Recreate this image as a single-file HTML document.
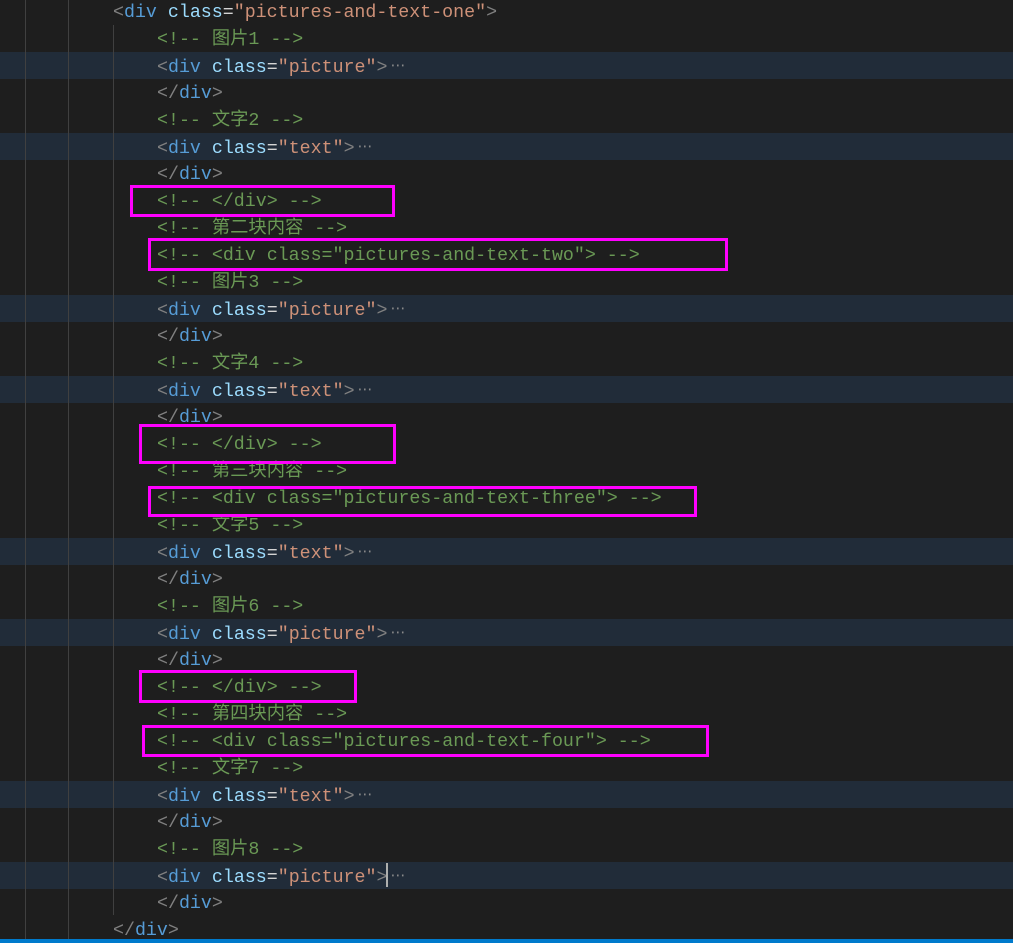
<!DOCTYPE html>
<html><head><meta charset="utf-8"><style>
body{margin:0;width:1013px;height:943px;background:#1e1e1e;overflow:hidden;position:relative;font-family:"Liberation Mono","Noto Sans CJK SC",monospace;font-size:18.3px;}
.l{position:absolute;left:0;width:1013px;height:27px;line-height:27px;white-space:pre;}
.l span{position:relative;top:2px}
.h{background:#212c39;}
.g{position:absolute;top:0;width:1px;background:#404040;}
.b{color:#808080}.t{color:#569cd6}.a{color:#9cdcfe}.s{color:#ce9178}.c{color:#6a9955}.w{color:#d4d4d4}.l .e{color:#8a8a8a;font-family:"DejaVu Sans",sans-serif;font-size:15px;top:0;padding-left:3px}
.box{position:absolute;border:3px solid #f0f;box-sizing:border-box;}
.bar{position:absolute;left:0;top:939px;width:1013px;height:4px;background:#007acc}
.cur{position:absolute;left:386px;top:863px;width:2px;height:24px;background:#aeafad}
</style></head><body>
<div class="l" style="top:-2px"><span style="padding-left:113px"></span><span class="b">&lt;</span><span class="t">div</span> <span class="a">class</span><span class="w">=</span><span class="s">"pictures-and-text-one"</span><span class="b">&gt;</span></div>
<div class="l" style="top:25px"><span style="padding-left:157px"></span><span class="c">&lt;!-- 图片1 --&gt;</span></div>
<div class="l h" style="top:52px"><span style="padding-left:157px"></span><span class="b">&lt;</span><span class="t">div</span> <span class="a">class</span><span class="w">=</span><span class="s">"picture"</span><span class="b">&gt;</span><span class="e">⋯</span></div>
<div class="l" style="top:79px"><span style="padding-left:157px"></span><span class="b">&lt;/</span><span class="t">div</span><span class="b">&gt;</span></div>
<div class="l" style="top:106px"><span style="padding-left:157px"></span><span class="c">&lt;!-- 文字2 --&gt;</span></div>
<div class="l h" style="top:133px"><span style="padding-left:157px"></span><span class="b">&lt;</span><span class="t">div</span> <span class="a">class</span><span class="w">=</span><span class="s">"text"</span><span class="b">&gt;</span><span class="e">⋯</span></div>
<div class="l" style="top:160px"><span style="padding-left:157px"></span><span class="b">&lt;/</span><span class="t">div</span><span class="b">&gt;</span></div>
<div class="l" style="top:187px"><span style="padding-left:157px"></span><span class="c">&lt;!-- &lt;/div&gt; --&gt;</span></div>
<div class="l" style="top:214px"><span style="padding-left:157px"></span><span class="c">&lt;!-- 第二块内容 --&gt;</span></div>
<div class="l" style="top:241px"><span style="padding-left:157px"></span><span class="c">&lt;!-- &lt;div class="pictures-and-text-two"&gt; --&gt;</span></div>
<div class="l" style="top:268px"><span style="padding-left:157px"></span><span class="c">&lt;!-- 图片3 --&gt;</span></div>
<div class="l h" style="top:295px"><span style="padding-left:157px"></span><span class="b">&lt;</span><span class="t">div</span> <span class="a">class</span><span class="w">=</span><span class="s">"picture"</span><span class="b">&gt;</span><span class="e">⋯</span></div>
<div class="l" style="top:322px"><span style="padding-left:157px"></span><span class="b">&lt;/</span><span class="t">div</span><span class="b">&gt;</span></div>
<div class="l" style="top:349px"><span style="padding-left:157px"></span><span class="c">&lt;!-- 文字4 --&gt;</span></div>
<div class="l h" style="top:376px"><span style="padding-left:157px"></span><span class="b">&lt;</span><span class="t">div</span> <span class="a">class</span><span class="w">=</span><span class="s">"text"</span><span class="b">&gt;</span><span class="e">⋯</span></div>
<div class="l" style="top:403px"><span style="padding-left:157px"></span><span class="b">&lt;/</span><span class="t">div</span><span class="b">&gt;</span></div>
<div class="l" style="top:430px"><span style="padding-left:157px"></span><span class="c">&lt;!-- &lt;/div&gt; --&gt;</span></div>
<div class="l" style="top:457px"><span style="padding-left:157px"></span><span class="c">&lt;!-- 第三块内容 --&gt;</span></div>
<div class="l" style="top:484px"><span style="padding-left:157px"></span><span class="c">&lt;!-- &lt;div class="pictures-and-text-three"&gt; --&gt;</span></div>
<div class="l" style="top:511px"><span style="padding-left:157px"></span><span class="c">&lt;!-- 文字5 --&gt;</span></div>
<div class="l h" style="top:538px"><span style="padding-left:157px"></span><span class="b">&lt;</span><span class="t">div</span> <span class="a">class</span><span class="w">=</span><span class="s">"text"</span><span class="b">&gt;</span><span class="e">⋯</span></div>
<div class="l" style="top:565px"><span style="padding-left:157px"></span><span class="b">&lt;/</span><span class="t">div</span><span class="b">&gt;</span></div>
<div class="l" style="top:592px"><span style="padding-left:157px"></span><span class="c">&lt;!-- 图片6 --&gt;</span></div>
<div class="l h" style="top:619px"><span style="padding-left:157px"></span><span class="b">&lt;</span><span class="t">div</span> <span class="a">class</span><span class="w">=</span><span class="s">"picture"</span><span class="b">&gt;</span><span class="e">⋯</span></div>
<div class="l" style="top:646px"><span style="padding-left:157px"></span><span class="b">&lt;/</span><span class="t">div</span><span class="b">&gt;</span></div>
<div class="l" style="top:673px"><span style="padding-left:157px"></span><span class="c">&lt;!-- &lt;/div&gt; --&gt;</span></div>
<div class="l" style="top:700px"><span style="padding-left:157px"></span><span class="c">&lt;!-- 第四块内容 --&gt;</span></div>
<div class="l" style="top:727px"><span style="padding-left:157px"></span><span class="c">&lt;!-- &lt;div class="pictures-and-text-four"&gt; --&gt;</span></div>
<div class="l" style="top:754px"><span style="padding-left:157px"></span><span class="c">&lt;!-- 文字7 --&gt;</span></div>
<div class="l h" style="top:781px"><span style="padding-left:157px"></span><span class="b">&lt;</span><span class="t">div</span> <span class="a">class</span><span class="w">=</span><span class="s">"text"</span><span class="b">&gt;</span><span class="e">⋯</span></div>
<div class="l" style="top:808px"><span style="padding-left:157px"></span><span class="b">&lt;/</span><span class="t">div</span><span class="b">&gt;</span></div>
<div class="l" style="top:835px"><span style="padding-left:157px"></span><span class="c">&lt;!-- 图片8 --&gt;</span></div>
<div class="l h" style="top:862px"><span style="padding-left:157px"></span><span class="b">&lt;</span><span class="t">div</span> <span class="a">class</span><span class="w">=</span><span class="s">"picture"</span><span class="b">&gt;</span><span class="e">⋯</span></div>
<div class="l" style="top:889px"><span style="padding-left:157px"></span><span class="b">&lt;/</span><span class="t">div</span><span class="b">&gt;</span></div>
<div class="l" style="top:916px"><span style="padding-left:113px"></span><span class="b">&lt;/</span><span class="t">div</span><span class="b">&gt;</span></div>
<div class="g" style="left:25px;height:939px"></div>
<div class="g" style="left:68px;height:939px"></div>
<div class="g" style="left:113px;top:25px;height:890px"></div>
<div class="cur"></div>
<div class="box" style="left:130px;top:185px;width:265px;height:32px"></div>
<div class="box" style="left:148px;top:238px;width:580px;height:33px"></div>
<div class="box" style="left:139px;top:424px;width:257px;height:40px"></div>
<div class="box" style="left:148px;top:486px;width:549px;height:31px"></div>
<div class="box" style="left:139px;top:670px;width:218px;height:33px"></div>
<div class="box" style="left:142px;top:725px;width:567px;height:32px"></div>
<div class="bar"></div>
</body></html>
